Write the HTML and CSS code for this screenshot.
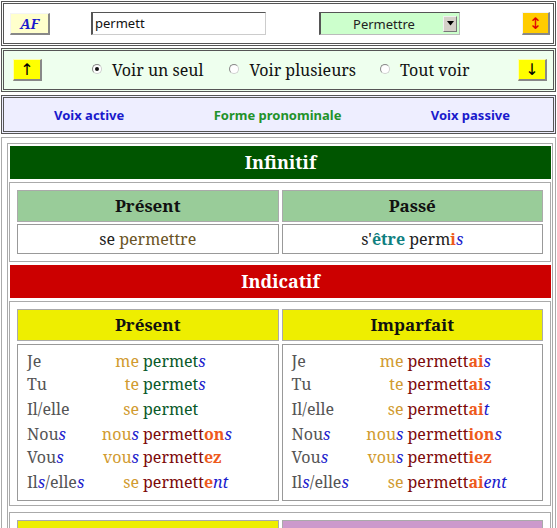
FILE: index.html
```html
<!DOCTYPE html>
<html lang="fr">
<head>
<meta charset="utf-8">
<title>Conjugaison : permettre</title>
<link rel="stylesheet" href="styles.css">
</head>
<body>
<div class="bar top">
  <div class="btn af">AF</div>
  <div class="input">permett</div>
  <div class="select">
    <span class="sel-text">Permettre</span>
    <span class="sel-arrow"><svg width="7" height="5" viewBox="0 0 7 5"><path d="M0 0h7L3.5 4.5z" fill="#000"/></svg></span>
  </div>
  <div class="btn orange">↕</div>
</div>

<div class="bar nav">
  <div class="btn yel">↑</div>
  <div class="opt o1"><span class="radio on"></span>Voir un seul</div>
  <div class="opt o2"><span class="radio"></span>Voir plusieurs</div>
  <div class="opt o3"><span class="radio"></span>Tout voir</div>
  <div class="btn yel down">↓</div>
</div>

<div class="bar voix">
  <span class="vblue">Voix active</span>
  <span class="vgreen">Forme pronominale</span>
  <span class="vblue">Voix passive</span>
</div>

<div class="main">
  <div class="col">
    <div class="head h-green">Infinitif</div>
    <div class="box">
      <div class="tbl tbl-inf">
        <div class="th th-green">Présent</div>
        <div class="th th-green">Passé</div>
        <div class="td inf">se <span class="brown">permettre</span></div>
        <div class="td inf">s'<span class="teal">être</span> perm<span class="o">i</span><span class="b">s</span></div>
      </div>
    </div>

    <div class="head h-red">Indicatif</div>
    <div class="box tense">
      <div class="tbl">
        <div class="th th-yellow">Présent</div>
        <div class="th th-yellow">Imparfait</div>
        <div class="td conj">
          <div class="row"><span class="p">Je</span><span class="r">me</span><span><span class="g">permet</span><span class="b">s</span></span></div>
          <div class="row"><span class="p">Tu</span><span class="r">te</span><span><span class="g">permet</span><span class="b">s</span></span></div>
          <div class="row tall"><span class="p">Il/elle</span><span class="r">se</span><span><span class="g">permet</span></span></div>
          <div class="row tall"><span class="p">Nou<span class="b">s</span></span><span class="r">nou<span class="b">s</span></span><span><span class="m">permett</span><span class="o">on</span><span class="b">s</span></span></div>
          <div class="row"><span class="p">Vou<span class="b">s</span></span><span class="r">vou<span class="b">s</span></span><span><span class="m">permett</span><span class="o">ez</span></span></div>
          <div class="row tall"><span class="p">Il<span class="b">s</span>/elle<span class="b">s</span></span><span class="r">se</span><span><span class="m">permett</span><span class="o">e</span><span class="b">nt</span></span></div>
        </div>
        <div class="td conj">
          <div class="row"><span class="p">Je</span><span class="r">me</span><span><span class="m">permett</span><span class="o">ai</span><span class="b">s</span></span></div>
          <div class="row"><span class="p">Tu</span><span class="r">te</span><span><span class="m">permett</span><span class="o">ai</span><span class="b">s</span></span></div>
          <div class="row tall"><span class="p">Il/elle</span><span class="r">se</span><span><span class="m">permett</span><span class="o">ai</span><span class="b">t</span></span></div>
          <div class="row tall"><span class="p">Nou<span class="b">s</span></span><span class="r">nou<span class="b">s</span></span><span><span class="m">permett</span><span class="o">ion</span><span class="b">s</span></span></div>
          <div class="row"><span class="p">Vou<span class="b">s</span></span><span class="r">vou<span class="b">s</span></span><span><span class="m">permett</span><span class="o">iez</span></span></div>
          <div class="row tall"><span class="p">Il<span class="b">s</span>/elle<span class="b">s</span></span><span class="r">se</span><span><span class="m">permett</span><span class="o">ai</span><span class="b">ent</span></span></div>
        </div>
      </div>
    </div>

    <div class="box tense next">
      <div class="tbl">
        <div class="th th-yellow"></div>
        <div class="th th-purple"></div>
      </div>
    </div>
  </div>
</div>
</body>
</html>
```

FILE: styles.css
```css
html, body {
  margin: 0;
  padding: 0;
  background: #fff;
}
body {
  width: 557px;
  font-family: "Noto Serif", "Droid Serif", "DejaVu Serif", serif;
  font-size: 16px;
  color: #222;
}

/* ---------- top bars ---------- */
.bar {
  box-sizing: border-box;
  margin: 0 1px;
  border: 3px double #555;
  display: flex;
  align-items: center;
}
.top {
  margin-top: 1px;
  height: 45px;
  background: #fff;
}
.nav {
  margin-top: 2px;
  height: 44px;
  background: #eeffee;
}
.voix {
  margin-top: 3px;
  height: 39px;
  background: #eeeeff;
  justify-content: space-between;
  padding: 0 43px 0 50px;
  font-family: "Noto Sans", "Open Sans", sans-serif;
  font-weight: bold;
  font-size: 13px;
}
.vblue { color: #1a1acc; }
.vgreen { color: #22922a; }

.btn {
  box-sizing: border-box;
  display: flex;
  align-items: center;
  justify-content: center;
  border-style: solid;
  border-width: 1px 2px 2px 1px;
  border-color: #f4f4f4 #888 #888 #f4f4f4;
  font-family: "DejaVu Sans", sans-serif;
}
.af {
  margin-left: 6px;
  width: 40px;
  height: 22px;
  background: #ffffcc;
  color: #1a1acc;
  font-family: "Noto Serif", "DejaVu Serif", serif;
  font-weight: bold;
  font-style: italic;
  font-size: 14px;
}
.input {
  box-sizing: border-box;
  margin-left: 41px;
  width: 175px;
  height: 23px;
  border-style: solid;
  border-width: 1px 1px 1px 2px;
  border-color: #555 #ccc #ccc #555;
  padding-left: 2px;
  font-family: "Noto Sans", sans-serif;
  font-size: 13px;
  line-height: 20px;
  color: #111;
}
.select {
  box-sizing: border-box;
  margin-left: 53px;
  width: 141px;
  height: 23px;
  border-style: solid;
  border-width: 1px 1px 1px 2px;
  border-color: #555 #bbb #bbb #555;
  background: #ccffcc;
  display: flex;
  align-items: center;
  font-family: "Noto Sans", sans-serif;
  font-size: 13px;
  color: #222;
}
.sel-text {
  flex: 1;
  text-align: center;
  padding-left: 4px;
}
.sel-arrow {
  box-sizing: border-box;
  width: 14px;
  height: 16px;
  margin-right: 2px;
  background: #d4d0c8;
  border-style: solid;
  border-width: 1px;
  border-color: #f0f0f0 #777 #777 #f0f0f0;
  display: flex;
  align-items: center;
  justify-content: center;
}
.orange {
  margin-left: 62px;
  width: 28px;
  height: 23px;
  background: #ffcc00;
  color: #e00000;
  font-size: 16px;
}
.yel {
  width: 29px;
  height: 22px;
  background: #ffff00;
  color: #000;
  font-size: 16px;
  border-color: #ffffaa #888 #888 #ffffaa;
}
.nav .yel:first-child { margin-left: 9px; }
.nav .down { margin-left: auto; margin-right: 6px; }

.opt {
  display: flex;
  align-items: center;
  font-size: 16px;
  color: #111;
}
.o1 { margin-left: 50px; }
.o2 { margin-left: 26px; }
.o3 { margin-left: 24px; }
.radio {
  box-sizing: border-box;
  width: 10px;
  height: 10px;
  border-radius: 50%;
  border: 1px solid #8a8a8a;
  border-right-color: #d0d0d0;
  border-bottom-color: #d0d0d0;
  background: radial-gradient(circle at 60% 60%, #fff 0, #fff 55%, #e6e6e6 100%);
  margin-right: 10px;
  margin-top: -3px;
  position: relative;
}
.radio.on::after {
  content: "";
  position: absolute;
  left: 2px;
  top: 2px;
  width: 4px;
  height: 4px;
  border-radius: 50%;
  background: #111;
}

/* ---------- main conjugation table ---------- */
.main {
  margin: 3px 1px 0 1px;
  border: 1px solid #aaa;
  padding: 5px 2px 5px 5px;
}
.col {
  border: 1px solid #aaa;
  padding: 0 0 2px 0;
}
.head {
  margin: 3px 1px 0 2px;
  height: 33px;
  line-height: 33px;
  text-align: center;
  color: #fff;
  font-weight: bold;
  font-size: 18px;
}
.head:first-child { margin-top: 2px; }
.h-green { background: #005500; }
.h-red { background: #cc0000; }

.box {
  margin: 3px 1px 0 1px;
  border: 1px solid #aaa;
  padding: 7px 7px 7px 7px;
}
.box.tense { padding-bottom: 4px; }
.box.next { margin-top: 6px; }

.tbl {
  display: grid;
  grid-template-columns: 1fr 1fr;
  column-gap: 3px;
  row-gap: 3px;
}
.tbl-inf { row-gap: 2px; }

.th {
  box-sizing: border-box;
  height: 32px;
  line-height: 30px;
  border: 1px solid #aaa;
  text-align: center;
  font-weight: bold;
  font-size: 17px;
  color: #111;
}
.th-green { background: #99cc99; }
.th-yellow { background: #eeee00; }
.th-purple { background: #cc99cc; }

.td {
  box-sizing: border-box;
  border: 1px solid #999;
  background: #fff;
}
.inf {
  height: 30px;
  line-height: 28px;
  text-align: center;
  font-size: 16px;
  color: #222;
}
.brown { color: #6b5526; }
.teal { color: #108080; font-weight: bold; }

.conj {
  padding: 5px 0 6px 9px;
  font-size: 16px;
}
.row {
  display: grid;
  grid-template-columns: 60px 48px 1fr;
  column-gap: 4px;
  height: 23px;
  line-height: 23px;
}
.row.tall {
  height: 25px;
  line-height: 27px;
}
.p { color: #555; }
.r { color: #d19b30; text-align: right; }
.g { color: #0a5a2a; }
.m { color: #7d0a0a; }
.o { color: #ee5a1c; font-weight: bold; }
.b { color: #1a1acc; font-style: italic; }
```
